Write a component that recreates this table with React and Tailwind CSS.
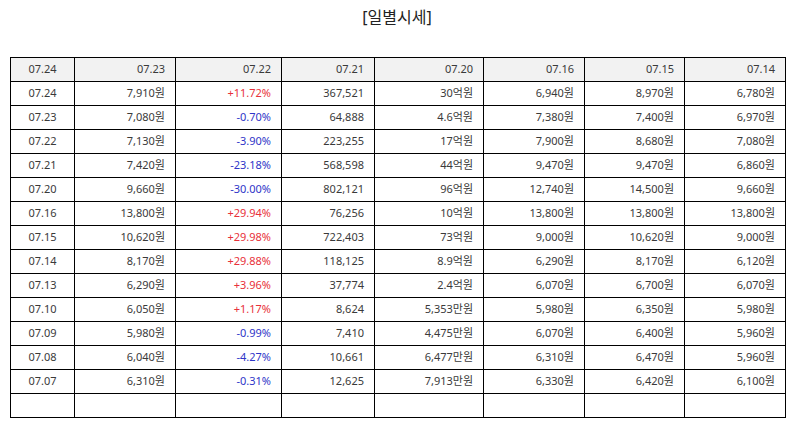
import React from "react";

const header = ["07.24", "07.23", "07.22", "07.21", "07.20", "07.16", "07.15", "07.14"];
const rows = [
  ["07.24", "7,910원", "+11.72%", "367,521", "30억원", "6,940원", "8,970원", "6,780원"],
  ["07.23", "7,080원", "-0.70%", "64,888", "4.6억원", "7,380원", "7,400원", "6,970원"],
  ["07.22", "7,130원", "-3.90%", "223,255", "17억원", "7,900원", "8,680원", "7,080원"],
  ["07.21", "7,420원", "-23.18%", "568,598", "44억원", "9,470원", "9,470원", "6,860원"],
  ["07.20", "9,660원", "-30.00%", "802,121", "96억원", "12,740원", "14,500원", "9,660원"],
  ["07.16", "13,800원", "+29.94%", "76,256", "10억원", "13,800원", "13,800원", "13,800원"],
  ["07.15", "10,620원", "+29.98%", "722,403", "73억원", "9,000원", "10,620원", "9,000원"],
  ["07.14", "8,170원", "+29.88%", "118,125", "8.9억원", "6,290원", "8,170원", "6,120원"],
  ["07.13", "6,290원", "+3.96%", "37,774", "2.4억원", "6,070원", "6,700원", "6,070원"],
  ["07.10", "6,050원", "+1.17%", "8,624", "5,353만원", "5,980원", "6,350원", "5,980원"],
  ["07.09", "5,980원", "-0.99%", "7,410", "4,475만원", "6,070원", "6,400원", "5,960원"],
  ["07.08", "6,040원", "-4.27%", "10,661", "6,477만원", "6,310원", "6,470원", "5,960원"],
  ["07.07", "6,310원", "-0.31%", "12,625", "7,913만원", "6,330원", "6,420원", "6,100원"],
  ["", "", "", "", "", "", "", ""],
];
const widths = ["w-[64px]", "w-[101px]", "w-[106px]", "w-[93px]", "w-[109px]", "w-[101px]", "w-[100px]", "w-[101px]"];

export default function App() {
  return (
    <div
      className="w-[794px] h-[425px] bg-white text-[#3a3a3a] overflow-hidden"
      style={{ fontFamily: '"Noto Sans", "Noto Sans CJK KR", sans-serif' }}
    >
      <div className="h-[36px] pt-[3px] text-center text-[16px] leading-[28px] font-normal text-[#222]">[일별시세]</div>
      <div className="pt-[21px] pl-[10px]">
        <table className="border-collapse table-fixed w-[776px] text-[11px]">
          <colgroup>
            {widths.map((w, i) => (
              <col key={i} className={w} />
            ))}
          </colgroup>
          <thead>
            <tr className="bg-[#f2f2f2] h-[24px]">
              {header.map((h, i) => (
                <th
                  key={i}
                  className={`border border-black font-normal p-0 ${i === 0 ? "text-center" : "text-right pr-[10px]"}`}
                >
                  {h}
                </th>
              ))}
            </tr>
          </thead>
          <tbody>
            {rows.map((r, ri) => (
              <tr key={ri} className="h-[24px]">
                {r.map((c, i) => {
                  let color = "";
                  if (i === 2 && c.startsWith("+")) color = "text-[#e8313a]";
                  if (i === 2 && c.startsWith("-")) color = "text-[#2f35c8]";
                  return (
                    <td
                      key={i}
                      className={`border border-black p-0 ${i === 0 ? "text-center" : "text-right pr-[10px]"} ${color}`}
                    >
                      {c}
                    </td>
                  );
                })}
              </tr>
            ))}
          </tbody>
        </table>
      </div>
    </div>
  );
}
